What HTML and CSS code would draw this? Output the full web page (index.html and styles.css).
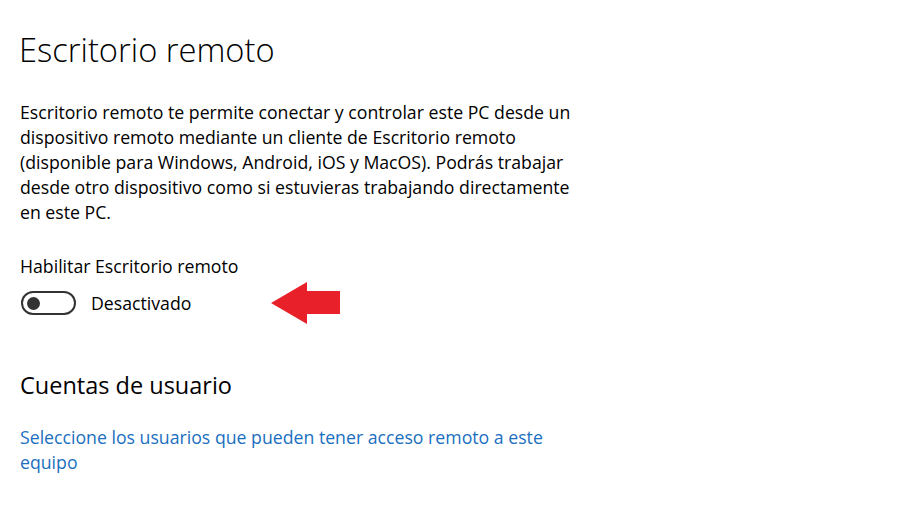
FILE: index.html
```html
<!DOCTYPE html>
<html lang="es">
<head>
    <meta charset="UTF-8">
    <title>Escritorio remoto</title>
    <link rel="stylesheet" href="styles.css">
</head>
<body>
    <div class="page">
        <h1 class="title">Escritorio remoto</h1>
        <p class="intro">Escritorio remoto te permite conectar y controlar este PC desde un<br>dispositivo remoto mediante un cliente de Escritorio remoto<br>(disponible para Windows, Android, iOS y MacOS). Podrás trabajar<br>desde otro dispositivo como si estuvieras trabajando directamente<br>en este PC.</p>

        <div class="setting">
            <div class="setting-label">Habilitar Escritorio remoto</div>
            <div class="toggle-row">
                <span class="toggle"><span class="knob"></span></span>
                <span class="toggle-text">Desactivado</span>
                <svg class="arrow" width="70" height="42" viewBox="0 0 70 42">
                    <polygon points="0,21 36,0 36,9 69,9 69,32 36,32 36,42" fill="#e8202a"/>
                </svg>
            </div>
        </div>

        <h2 class="subtitle">Cuentas de usuario</h2>
        <a class="link" href="#">Seleccione los usuarios que pueden tener acceso remoto a este<br>equipo</a>
    </div>
</body>
</html>
```

FILE: styles.css
```css
body {
    margin: 0;
    background: #ffffff;
    color: #000000;
    font-family: "Open Sans", "Noto Sans", sans-serif;
}
.page {
    padding: 28px 20px 0 20px;
}
.title {
    font-size: 32.7px;
    font-weight: 300;
    margin: 0 0 0 -1px;
    line-height: 44px;
}
.intro {
    font-size: 17.7px;
    line-height: 25px;
    margin: 28px 0 0 0;
}
.setting {
    margin-top: 29px;
}
.setting-label {
    font-size: 17.7px;
    line-height: 25px;
}
.toggle-row {
    display: flex;
    align-items: center;
    margin-top: 3px;
}
.toggle {
    width: 47px;
    height: 20px;
    margin-left: 1px;
    border: 2px solid #333333;
    border-radius: 12px;
    display: flex;
    align-items: center;
    padding-left: 4px;
    box-sizing: content-box;
}
.knob {
    width: 13px;
    height: 13px;
    border-radius: 50%;
    background: #333333;
}
.toggle-text {
    font-size: 17.7px;
    margin-left: 15px;
}
.arrow {
    margin-left: 80px;
}
.subtitle {
    font-size: 23.5px;
    font-weight: 400;
    margin: 46px 0 0 0;
    line-height: 30px;
}
.link {
    display: block;
    margin-top: 25px;
    font-size: 17.7px;
    line-height: 25px;
    color: #1a6fc0;
    text-decoration: none;
}
```
